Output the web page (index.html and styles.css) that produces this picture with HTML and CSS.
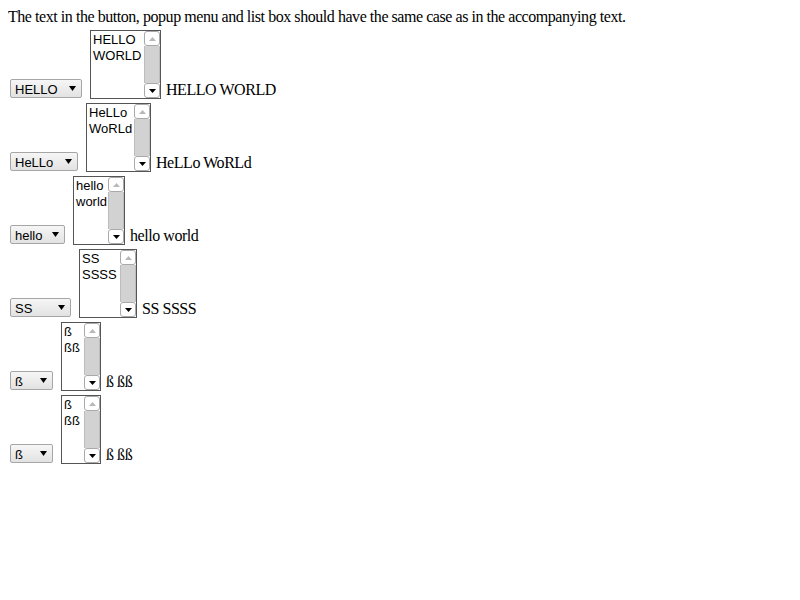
FILE: index.html
```html
<!DOCTYPE html>
<html>
<head>
<meta charset="utf-8">
<link rel="stylesheet" href="styles.css">
</head>
<body>
<div class="intro">The text in the button, popup menu and list box should have the same case as in the accompanying text.</div>

<div class="row">
  <div class="select w1"><span class="sel-text">HELLO</span><svg class="arrow" width="7" height="5" viewBox="0 0 7 5"><path d="M0 0H7L3.5 5Z" fill="#000"/></svg></div>
  <div class="listbox l1"><div class="items"><div>HELLO</div><div>WORLD</div></div><div class="sb"><div class="sb-btn up"><svg width="7" height="4" viewBox="0 0 7 4"><path d="M0 4H7L3.5 0Z" fill="#b8b8b8"/></svg></div><div class="sb-track"></div><div class="sb-btn down"><svg width="7" height="4" viewBox="0 0 7 4"><path d="M0 0H7L3.5 4Z" fill="#000"/></svg></div></div></div>
  <span class="label">HELLO WORLD</span>
</div>

<div class="row">
  <div class="select w2"><span class="sel-text">HeLLo</span><svg class="arrow" width="7" height="5" viewBox="0 0 7 5"><path d="M0 0H7L3.5 5Z" fill="#000"/></svg></div>
  <div class="listbox l2"><div class="items"><div>HeLLo</div><div>WoRLd</div></div><div class="sb"><div class="sb-btn up"><svg width="7" height="4" viewBox="0 0 7 4"><path d="M0 4H7L3.5 0Z" fill="#b8b8b8"/></svg></div><div class="sb-track"></div><div class="sb-btn down"><svg width="7" height="4" viewBox="0 0 7 4"><path d="M0 0H7L3.5 4Z" fill="#000"/></svg></div></div></div>
  <span class="label">HeLLo WoRLd</span>
</div>

<div class="row">
  <div class="select w3"><span class="sel-text">hello</span><svg class="arrow" width="7" height="5" viewBox="0 0 7 5"><path d="M0 0H7L3.5 5Z" fill="#000"/></svg></div>
  <div class="listbox l3"><div class="items"><div>hello</div><div>world</div></div><div class="sb"><div class="sb-btn up"><svg width="7" height="4" viewBox="0 0 7 4"><path d="M0 4H7L3.5 0Z" fill="#b8b8b8"/></svg></div><div class="sb-track"></div><div class="sb-btn down"><svg width="7" height="4" viewBox="0 0 7 4"><path d="M0 0H7L3.5 4Z" fill="#000"/></svg></div></div></div>
  <span class="label">hello world</span>
</div>

<div class="row">
  <div class="select w4"><span class="sel-text">SS</span><svg class="arrow" width="7" height="5" viewBox="0 0 7 5"><path d="M0 0H7L3.5 5Z" fill="#000"/></svg></div>
  <div class="listbox l4"><div class="items"><div>SS</div><div>SSSS</div></div><div class="sb"><div class="sb-btn up"><svg width="7" height="4" viewBox="0 0 7 4"><path d="M0 4H7L3.5 0Z" fill="#b8b8b8"/></svg></div><div class="sb-track"></div><div class="sb-btn down"><svg width="7" height="4" viewBox="0 0 7 4"><path d="M0 0H7L3.5 4Z" fill="#000"/></svg></div></div></div>
  <span class="label">SS SSSS</span>
</div>

<div class="row">
  <div class="select w5"><span class="sel-text">ß</span><svg class="arrow" width="7" height="5" viewBox="0 0 7 5"><path d="M0 0H7L3.5 5Z" fill="#000"/></svg></div>
  <div class="listbox l5"><div class="items"><div>ß</div><div>ßß</div></div><div class="sb"><div class="sb-btn up"><svg width="7" height="4" viewBox="0 0 7 4"><path d="M0 4H7L3.5 0Z" fill="#b8b8b8"/></svg></div><div class="sb-track"></div><div class="sb-btn down"><svg width="7" height="4" viewBox="0 0 7 4"><path d="M0 0H7L3.5 4Z" fill="#000"/></svg></div></div></div>
  <span class="label">ß ßß</span>
</div>

<div class="row">
  <div class="select w5"><span class="sel-text">ß</span><svg class="arrow" width="7" height="5" viewBox="0 0 7 5"><path d="M0 0H7L3.5 5Z" fill="#000"/></svg></div>
  <div class="listbox l5"><div class="items"><div>ß</div><div>ßß</div></div><div class="sb"><div class="sb-btn up"><svg width="7" height="4" viewBox="0 0 7 4"><path d="M0 4H7L3.5 0Z" fill="#b8b8b8"/></svg></div><div class="sb-track"></div><div class="sb-btn down"><svg width="7" height="4" viewBox="0 0 7 4"><path d="M0 0H7L3.5 4Z" fill="#000"/></svg></div></div></div>
  <span class="label">ß ßß</span>
</div>
</body>
</html>
```

FILE: styles.css
```css
body {
  margin: 8px;
  font-family: "Liberation Serif", "Times New Roman", serif;
  font-size: 16px;
  letter-spacing: -0.45px;
  color: #000;
  background: #fff;
}

.intro {
  line-height: 18px;
}

.row {
  display: flex;
  align-items: flex-end;
  padding-top: 4px;
}

.select {
  box-sizing: border-box;
  margin-left: 2px;
  margin-bottom: 1px;
  height: 19px;
  border: 1px solid #a6a6a6;
  border-radius: 2px;
  background: linear-gradient(#f6f6f6, #e2e2e2);
  display: flex;
  align-items: center;
  justify-content: space-between;
  padding: 0 5px 0 4px;
  font-family: "Liberation Sans", Arial, sans-serif;
  font-size: 13px;
  line-height: 15px;
  letter-spacing: 0;
}

.sel-text {
  padding-top: 1px;
}

.arrow {
  display: block;
  flex: none;
}

.w1 { width: 72px; }
.w2 { width: 68px; }
.w3 { width: 55px; }
.w4 { width: 61px; }
.w5 { width: 43px; }

.listbox {
  box-sizing: border-box;
  margin-left: 8px;
  height: 69px;
  border: 1px solid #555;
  background: #fff;
  display: flex;
  font-family: "Liberation Sans", Arial, sans-serif;
  font-size: 13px;
  line-height: 16px;
  letter-spacing: 0;
}

.l1 { width: 71px; }
.l2 { width: 65px; }
.l3 { width: 52px; }
.l4 { width: 58px; }
.l5 { width: 40px; }

.items {
  flex: 1;
  padding: 1px 0 0 2px;
  white-space: nowrap;
  overflow: hidden;
}

.sb {
  width: 16px;
  flex: none;
  display: flex;
  flex-direction: column;
  background: #fff;
}

.sb-btn {
  box-sizing: border-box;
  height: 15px;
  border: 1px solid #a9a9a9;
  border-radius: 3px;
  background: #fff;
  display: flex;
  align-items: center;
  justify-content: center;
}

.sb-track {
  flex: 1;
  background: #d2d2d2;
  border-left: 1px solid #bdbdbd;
  border-right: 1px solid #bdbdbd;
}

.label {
  margin-left: 5px;
  line-height: 18px;
  white-space: nowrap;
}
```
